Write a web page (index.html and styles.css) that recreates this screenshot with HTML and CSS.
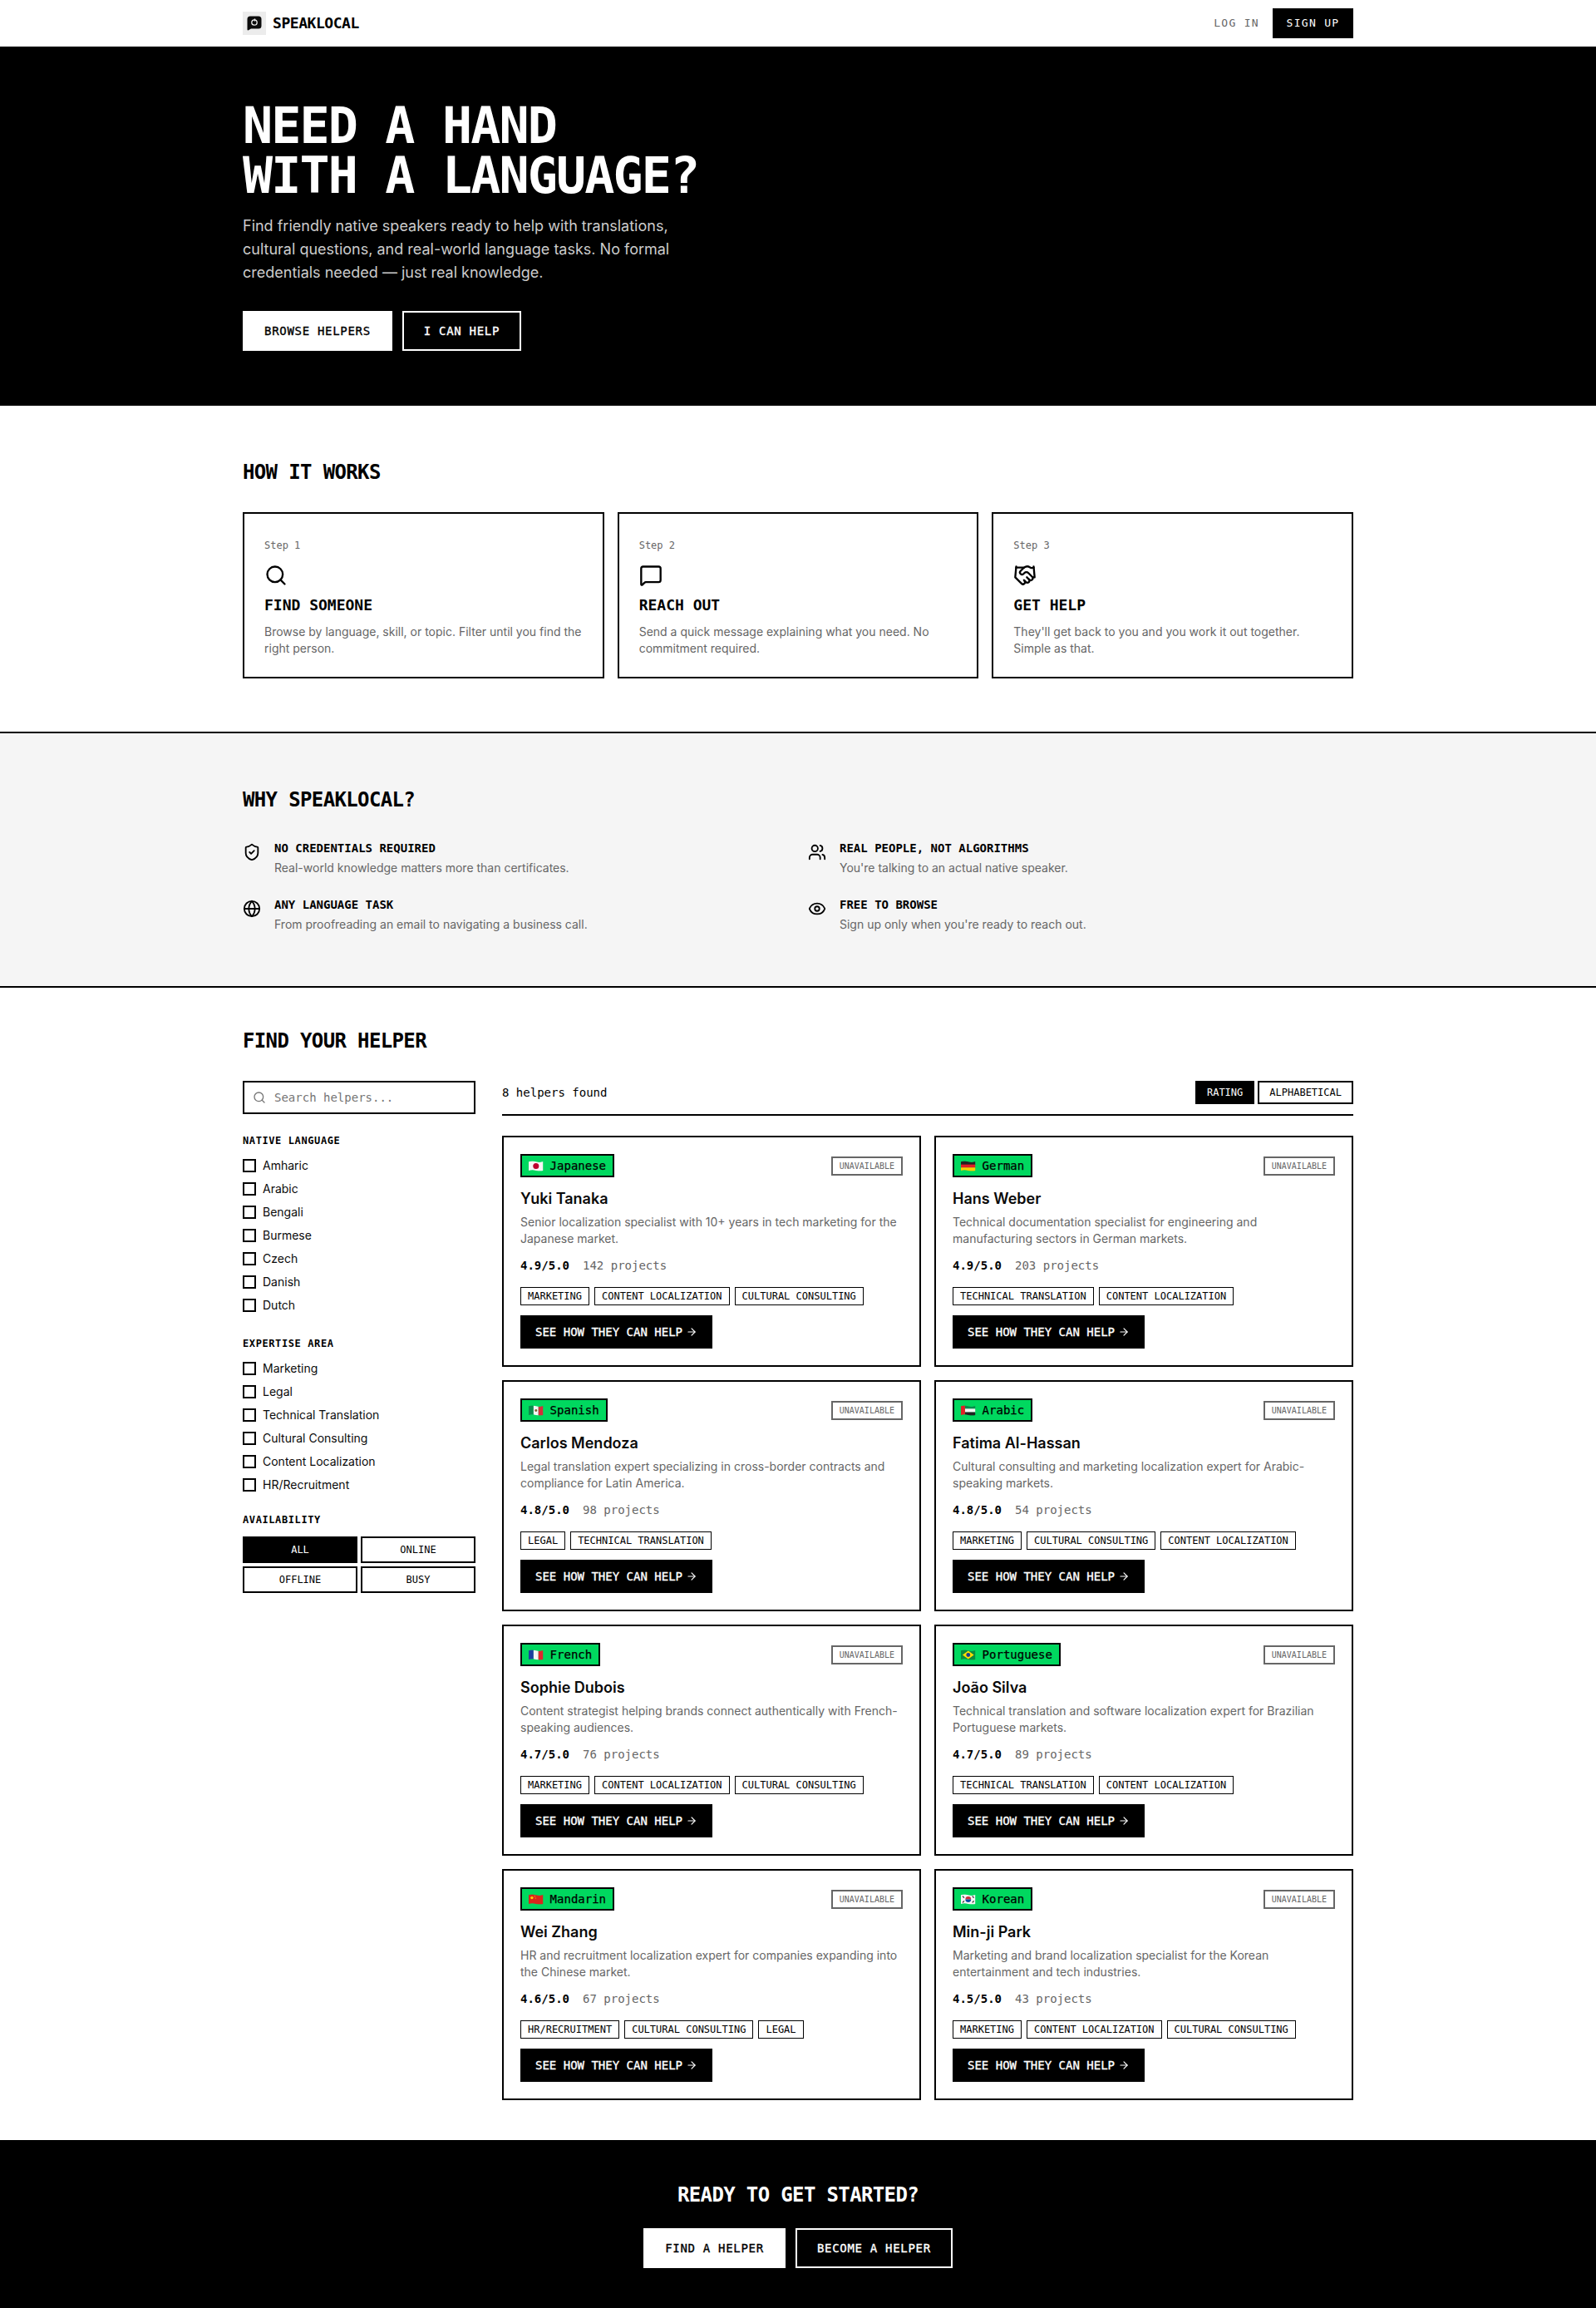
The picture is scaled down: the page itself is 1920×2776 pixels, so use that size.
FILE: index.html
```html
<!DOCTYPE html>
<html lang="en">
<head>
<meta charset="utf-8">
<title>SpeakLocal</title>
<link rel="stylesheet" href="styles.css">
</head>
<body>
<svg class="defs" aria-hidden="true">
  <defs>
    <clipPath id="wave"><path d="M0 1.2C3 .2 5 .2 9 1.2S15 2 18 1V12C15 13 13 13 9 12S3 11.2 0 12.2Z"/></clipPath>
    <symbol id="i-search" viewBox="0 0 24 24"><path d="m21 21-4.34-4.34"/><circle cx="11" cy="11" r="8"/></symbol>
    <symbol id="i-arrow" viewBox="0 0 24 24"><path d="M5 12h14"/><path d="m12 5 7 7-7 7"/></symbol>
  </defs>
</svg>

<header class="nav">
  <div class="wrap nav-row">
    <a class="brand">
      <span class="logo">
        <svg viewBox="0 0 18 18" width="18" height="18"><path class="logo-bubble" d="M4 .5h10A3.5 3.5 0 0 1 17.500 4v8a3.500 3.500 0 0 1-3.500 3.500H5L1.500 17.500A1 1 0 0 1 .5 16.500V4A3.500 3.500 0 0 1 4 .5Z"/><circle class="logo-ring" cx="9" cy="8" r="3.200"/><path class="logo-ring" d="M9.500 3.500v3"/></svg>
      </span>
      <span class="brand-name">SPEAKLOCAL</span>
    </a>
    <div class="nav-actions">
      <a class="login">LOG IN</a>
      <a class="signup">SIGN UP</a>
    </div>
  </div>
</header>

<section class="hero">
  <div class="wrap">
    <h1>NEED A HAND<br>WITH A LANGUAGE?</h1>
    <p class="hero-copy">Find friendly native speakers ready to help with translations, cultural questions, and real-world language tasks. No formal credentials needed — just real knowledge.</p>
    <div class="btn-row">
      <a class="btn btn-light">BROWSE HELPERS</a>
      <a class="btn btn-ghost">I CAN HELP</a>
    </div>
  </div>
</section>

<section class="how">
  <div class="wrap">
    <h2>HOW IT WORKS</h2>
    <div class="steps">
      <article class="step">
        <div class="step-num">Step 1</div>
        <svg class="ico step-ico" viewBox="0 0 24 24"><path d="m21 21-4.340-4.340"/><circle cx="11" cy="11" r="8"/></svg>
        <h3>FIND SOMEONE</h3>
        <p>Browse by language, skill, or topic. Filter until you find the right person.</p>
      </article>
      <article class="step">
        <div class="step-num">Step 2</div>
        <svg class="ico step-ico" viewBox="0 0 24 24"><path d="M22 17a2 2 0 0 1-2 2H6.828a2 2 0 0 0-1.414.586l-2.202 2.202A.71.71 0 0 1 2 21.286V5a2 2 0 0 1 2-2h16a2 2 0 0 1 2 2z"/></svg>
        <h3>REACH OUT</h3>
        <p>Send a quick message explaining what you need. No commitment required.</p>
      </article>
      <article class="step">
        <div class="step-num">Step 3</div>
        <svg class="ico step-ico" viewBox="0 0 24 24"><path d="m11 17 2 2a1 1 0 1 0 3-3"/><path d="m14 14 2.500 2.500a1 1 0 1 0 3-3l-3.880-3.880a3 3 0 0 0-4.240 0l-.88.88a1 1 0 1 1-3-3l2.810-2.810a5.790 5.790 0 0 1 7.060-.87l.47.28a2 2 0 0 0 1.420.25L21 4"/><path d="m21 3 1 11h-2"/><path d="M3 3 2 14l6.500 6.500a1 1 0 1 0 3-3"/><path d="M3 4h8"/></svg>
        <h3>GET HELP</h3>
        <p>They'll get back to you and you work it out together. Simple as that.</p>
      </article>
    </div>
  </div>
</section>

<section class="why">
  <div class="wrap">
    <h2>WHY SPEAKLOCAL?</h2>
    <div class="why-grid">
      <div class="why-item">
        <svg class="ico why-ico" viewBox="0 0 24 24"><path d="M20 13c0 5-3.500 7.500-7.660 8.950a1 1 0 0 1-.67-.01C7.500 20.500 4 18 4 13V6a1 1 0 0 1 1-1c2 0 4.500-1.200 6.240-2.720a1.170 1.170 0 0 1 1.520 0C14.510 3.810 17 5 19 5a1 1 0 0 1 1 1z"/><path d="m9 12 2 2 4-4"/></svg>
        <div><h4>NO CREDENTIALS REQUIRED</h4><p>Real-world knowledge matters more than certificates.</p></div>
      </div>
      <div class="why-item">
        <svg class="ico why-ico" viewBox="0 0 24 24"><path d="M16 21v-2a4 4 0 0 0-4-4H6a4 4 0 0 0-4 4v2"/><circle cx="9" cy="7" r="4"/><path d="M22 21v-2a4 4 0 0 0-3-3.870"/><path d="M16 3.130a4 4 0 0 1 0 7.750"/></svg>
        <div><h4>REAL PEOPLE, NOT ALGORITHMS</h4><p>You're talking to an actual native speaker.</p></div>
      </div>
      <div class="why-item">
        <svg class="ico why-ico" viewBox="0 0 24 24"><circle cx="12" cy="12" r="10"/><path d="M12 2a14.500 14.500 0 0 0 0 20 14.500 14.500 0 0 0 0-20"/><path d="M2 12h20"/></svg>
        <div><h4>ANY LANGUAGE TASK</h4><p>From proofreading an email to navigating a business call.</p></div>
      </div>
      <div class="why-item">
        <svg class="ico why-ico" viewBox="0 0 24 24"><path d="M2.062 12.348a1 1 0 0 1 0-.696 10.750 10.750 0 0 1 19.876 0 1 1 0 0 1 0 .696 10.750 10.750 0 0 1-19.876 0"/><circle cx="12" cy="12" r="3"/></svg>
        <div><h4>FREE TO BROWSE</h4><p>Sign up only when you're ready to reach out.</p></div>
      </div>
    </div>
  </div>
</section>

<section class="finder">
  <div class="wrap">
    <h2>FIND YOUR HELPER</h2>
    <div class="finder-body">
      <aside class="sidebar">
        <label class="search">
          <svg class="ico search-ico"><use href="#i-search"/></svg>
          <span class="search-ph">Search helpers...</span>
        </label>
        <div class="filter filter-lang">
          <h5>NATIVE LANGUAGE</h5>
          <ul class="checks">
            <li><span class="box"></span>Amharic</li>
            <li><span class="box"></span>Arabic</li>
            <li><span class="box"></span>Bengali</li>
            <li><span class="box"></span>Burmese</li>
            <li><span class="box"></span>Czech</li>
            <li><span class="box"></span>Danish</li>
            <li><span class="box"></span>Dutch</li>
          </ul>
        </div>
        <div class="filter">
          <h5>EXPERTISE AREA</h5>
          <ul class="checks">
            <li><span class="box"></span>Marketing</li>
            <li><span class="box"></span>Legal</li>
            <li><span class="box"></span>Technical Translation</li>
            <li><span class="box"></span>Cultural Consulting</li>
            <li><span class="box"></span>Content Localization</li>
            <li><span class="box"></span>HR/Recruitment</li>
          </ul>
        </div>
        <div class="filter">
          <h5>AVAILABILITY</h5>
          <div class="avail">
            <a class="on">ALL</a><a>ONLINE</a><a>OFFLINE</a><a>BUSY</a>
          </div>
        </div>
      </aside>

      <div class="results">
        <div class="toolbar">
          <span class="count">8 helpers found</span>
          <div class="sort"><a class="on">RATING</a><a>ALPHABETICAL</a></div>
        </div>
        <div class="cards">

          <article class="card">
            <div class="card-top">
              <span class="chip"><svg class="flag" viewBox="0 0 18 13"><g clip-path="url(#wave)"><rect width="18" height="13" fill="#f5f5f5"/><circle cx="9" cy="6.500" r="3.600" fill="#bc002d"/></g></svg>Japanese</span>
              <span class="status">UNAVAILABLE</span>
            </div>
            <h3 class="name">Yuki Tanaka</h3>
            <p class="bio">Senior localization specialist with 10+ years in tech marketing for the Japanese market.</p>
            <div class="stats"><b>4.9/5.0</b><span>142 projects</span></div>
            <div class="tags"><span>MARKETING</span><span>CONTENT LOCALIZATION</span><span>CULTURAL CONSULTING</span></div>
            <a class="cta">SEE HOW THEY CAN HELP<svg class="ico cta-ico"><use href="#i-arrow"/></svg></a>
          </article>

          <article class="card">
            <div class="card-top">
              <span class="chip"><svg class="flag" viewBox="0 0 18 13"><g clip-path="url(#wave)"><rect width="18" height="5" fill="#222"/><rect y="4.600" width="18" height="4" fill="#dd1f26"/><rect y="8.400" width="18" height="5" fill="#ffce00"/></g></svg>German</span>
              <span class="status">UNAVAILABLE</span>
            </div>
            <h3 class="name">Hans Weber</h3>
            <p class="bio">Technical documentation specialist for engineering and manufacturing sectors in German markets.</p>
            <div class="stats"><b>4.9/5.0</b><span>203 projects</span></div>
            <div class="tags"><span>TECHNICAL TRANSLATION</span><span>CONTENT LOCALIZATION</span></div>
            <a class="cta">SEE HOW THEY CAN HELP<svg class="ico cta-ico"><use href="#i-arrow"/></svg></a>
          </article>

          <article class="card">
            <div class="card-top">
              <span class="chip"><svg class="flag" viewBox="0 0 18 13"><g clip-path="url(#wave)"><rect width="6" height="13" fill="#0b8a4d"/><rect x="6" width="6" height="13" fill="#f5f5f5"/><rect x="12" width="6" height="13" fill="#d32f3a"/><circle cx="9" cy="6.500" r="1.500" fill="#7a5a2c"/></g></svg>Spanish</span>
              <span class="status">UNAVAILABLE</span>
            </div>
            <h3 class="name">Carlos Mendoza</h3>
            <p class="bio">Legal translation expert specializing in cross-border contracts and compliance for Latin America.</p>
            <div class="stats"><b>4.8/5.0</b><span>98 projects</span></div>
            <div class="tags"><span>LEGAL</span><span>TECHNICAL TRANSLATION</span></div>
            <a class="cta">SEE HOW THEY CAN HELP<svg class="ico cta-ico"><use href="#i-arrow"/></svg></a>
          </article>

          <article class="card">
            <div class="card-top">
              <span class="chip"><svg class="flag" viewBox="0 0 18 13"><g clip-path="url(#wave)"><rect x="5" width="13" height="4.500" fill="#0b8a4d"/><rect x="5" y="4.300" width="13" height="4.400" fill="#f5f5f5"/><rect x="5" y="8.600" width="13" height="5" fill="#222"/><rect width="5" height="13" fill="#e01f26"/></g></svg>Arabic</span>
              <span class="status">UNAVAILABLE</span>
            </div>
            <h3 class="name">Fatima Al-Hassan</h3>
            <p class="bio">Cultural consulting and marketing localization expert for Arabic-speaking markets.</p>
            <div class="stats"><b>4.8/5.0</b><span>54 projects</span></div>
            <div class="tags"><span>MARKETING</span><span>CULTURAL CONSULTING</span><span>CONTENT LOCALIZATION</span></div>
            <a class="cta">SEE HOW THEY CAN HELP<svg class="ico cta-ico"><use href="#i-arrow"/></svg></a>
          </article>

          <article class="card">
            <div class="card-top">
              <span class="chip"><svg class="flag" viewBox="0 0 18 13"><g clip-path="url(#wave)"><rect width="6" height="13" fill="#1d3f9e"/><rect x="6" width="6" height="13" fill="#f5f5f5"/><rect x="12" width="6" height="13" fill="#e0262e"/></g></svg>French</span>
              <span class="status">UNAVAILABLE</span>
            </div>
            <h3 class="name">Sophie Dubois</h3>
            <p class="bio">Content strategist helping brands connect authentically with French-speaking audiences.</p>
            <div class="stats"><b>4.7/5.0</b><span>76 projects</span></div>
            <div class="tags"><span>MARKETING</span><span>CONTENT LOCALIZATION</span><span>CULTURAL CONSULTING</span></div>
            <a class="cta">SEE HOW THEY CAN HELP<svg class="ico cta-ico"><use href="#i-arrow"/></svg></a>
          </article>

          <article class="card">
            <div class="card-top">
              <span class="chip"><svg class="flag" viewBox="0 0 18 13"><g clip-path="url(#wave)"><rect width="18" height="13" fill="#0b8a3e"/><path d="M9 1.500 16 6.500 9 11.500 2 6.500Z" fill="#fedf00"/><circle cx="9" cy="6.500" r="2.500" fill="#1c3a8c"/></g></svg>Portuguese</span>
              <span class="status">UNAVAILABLE</span>
            </div>
            <h3 class="name">João Silva</h3>
            <p class="bio">Technical translation and software localization expert for Brazilian Portuguese markets.</p>
            <div class="stats"><b>4.7/5.0</b><span>89 projects</span></div>
            <div class="tags"><span>TECHNICAL TRANSLATION</span><span>CONTENT LOCALIZATION</span></div>
            <a class="cta">SEE HOW THEY CAN HELP<svg class="ico cta-ico"><use href="#i-arrow"/></svg></a>
          </article>

          <article class="card">
            <div class="card-top">
              <span class="chip"><svg class="flag" viewBox="0 0 18 13"><g clip-path="url(#wave)"><rect width="18" height="13" fill="#d8261c"/><circle cx="4" cy="4.500" r="1.700" fill="#ffd400"/><circle cx="7.500" cy="2.700" r=".6" fill="#ffd400"/><circle cx="8.500" cy="5" r=".6" fill="#ffd400"/></g></svg>Mandarin</span>
              <span class="status">UNAVAILABLE</span>
            </div>
            <h3 class="name">Wei Zhang</h3>
            <p class="bio">HR and recruitment localization expert for companies expanding into the Chinese market.</p>
            <div class="stats"><b>4.6/5.0</b><span>67 projects</span></div>
            <div class="tags"><span>HR/RECRUITMENT</span><span>CULTURAL CONSULTING</span><span>LEGAL</span></div>
            <a class="cta">SEE HOW THEY CAN HELP<svg class="ico cta-ico"><use href="#i-arrow"/></svg></a>
          </article>

          <article class="card">
            <div class="card-top">
              <span class="chip"><svg class="flag" viewBox="0 0 18 13"><g clip-path="url(#wave)"><rect width="18" height="13" fill="#f5f5f5"/><path d="M5.500 6.500a3.500 3.500 0 0 1 7 0Z" fill="#cd2e3a"/><path d="M5.500 6.500a3.500 3.500 0 0 0 7 0Z" fill="#0047a0"/><path d="M2 2.500 4 4.500M14 2.500 16 4.500M2 10.500 4 8.500M14 10.500 16 8.500" stroke="#222" stroke-width="1.200"/></g></svg>Korean</span>
              <span class="status">UNAVAILABLE</span>
            </div>
            <h3 class="name">Min-ji Park</h3>
            <p class="bio">Marketing and brand localization specialist for the Korean entertainment and tech industries.</p>
            <div class="stats"><b>4.5/5.0</b><span>43 projects</span></div>
            <div class="tags"><span>MARKETING</span><span>CONTENT LOCALIZATION</span><span>CULTURAL CONSULTING</span></div>
            <a class="cta">SEE HOW THEY CAN HELP<svg class="ico cta-ico"><use href="#i-arrow"/></svg></a>
          </article>

        </div>
      </div>
    </div>
  </div>
</section>

<section class="ready">
  <h2>READY TO GET STARTED?</h2>
  <div class="btn-row btn-row-center">
    <a class="btn btn-light">FIND A HELPER</a>
    <a class="btn btn-ghost">BECOME A HELPER</a>
  </div>
</section>
</body>
</html>
```
FILE: styles.css
```css
* { box-sizing: border-box; }
html, body { margin: 0; padding: 0; }
body { background: #fff; color: #000; font-family: "Inter", "Liberation Sans", sans-serif; font-size: 14px; line-height: 20px; }
h1, h2, h3, h4, h5, p, ul { margin: 0; padding: 0; }
ul { list-style: none; }
.defs { display: block; width: 0; height: 0; }
.wrap { width: 1336px; margin: 0 auto; }
.ico { fill: none; stroke: currentColor; stroke-width: 2; stroke-linecap: round; stroke-linejoin: round; flex: none; }

h1, h2, .step h3, h4, h5, .brand-name, .login, .signup, .btn, .step-num, .search-ph, .avail a, .sort a, .count, .chip, .status, .stats, .tags span, .cta {
  font-family: "DejaVu Sans Mono", "Liberation Mono", monospace;
}

.nav { height: 56px; background: #fff; }
.nav-row { height: 56px; display: flex; align-items: center; justify-content: space-between; }
.brand { display: flex; align-items: center; gap: 8px; }
.logo { width: 28px; height: 28px; background: #ececec; display: flex; align-items: center; justify-content: center; }
.logo-bubble { fill: #0c0c0c; }
.logo-ring { fill: none; stroke: #f0f0f0; stroke-width: 1.300; }
.brand-name { font-size: 18px; line-height: 28px; font-weight: 700; letter-spacing: -0.45px; }
.nav-actions { display: flex; align-items: center; gap: 16px; }
.login { font-size: 13px; line-height: 20px; letter-spacing: 1.3px; color: #666; }
.signup { font-size: 13px; line-height: 20px; letter-spacing: 1.3px; background: #000; color: #fff; padding: 8px 16.600px; }

.hero { background: #000; color: #fff; padding: 64px 0 66px; }
h1 { padding-top: 1px; font-size: 60px; line-height: 60px; font-weight: 700; letter-spacing: -1.850px; }
.hero-copy { width: 540px; margin-top: 17px; font-size: 18px; line-height: 28px; color: #ccc; }
.btn-row { display: flex; gap: 12px; margin-top: 32px; }
.btn-row-center { justify-content: center; margin-top: 24px; }
.btn { display: block; font-size: 14px; line-height: 20px; letter-spacing: 0.7px; padding: 12px 24px; border: 2px solid #fff; -webkit-text-stroke: 0.35px; }
.btn-light { background: #fff; color: #000; }
.btn-ghost { background: #000; color: #fff; }

h2 { font-size: 24px; line-height: 32px; font-weight: 700; letter-spacing: -0.64px; }

.how { padding: 64px 0; }
.steps { display: grid; grid-template-columns: repeat(3, 1fr); gap: 16px; margin-top: 32px; }
.step { height: 200px; border: 2px solid #000; padding: 30px 24px 24px; }
.step-num { font-size: 12px; line-height: 16px; color: #666; }
.step-ico { display: block; width: 28px; height: 28px; margin-top: 14px; }
.step h3 { margin-top: 8px; font-size: 18px; line-height: 28px; font-weight: 700; }
.step p { margin-top: 8px; color: #666; }

.why { background: #f5f5f5; border-top: 2px solid #000; border-bottom: 2px solid #000; padding: 64px 0; }
.why-grid { display: grid; grid-template-columns: 1fr 1fr; gap: 24px; margin-top: 32px; }
.why-item { display: flex; gap: 16px; align-items: flex-start; }
.why-ico { width: 22px; height: 22px; margin-top: 4px; }
.why-item h4 { font-size: 14px; line-height: 20px; font-weight: 700; }
.why-item p { margin-top: 4px; color: #666; }

.finder { padding: 48px 0; }
.finder-body { display: flex; gap: 32px; margin-top: 32px; }
.sidebar { width: 280px; flex: none; }
.search { display: flex; align-items: center; height: 40px; border: 2px solid #000; padding-left: 10px; gap: 10px; }
.search-ico { width: 16px; height: 16px; color: #757575; }
.search-ph { font-size: 14px; line-height: 20px; color: #757575; }
.filter { margin-top: 24px; }
.filter-lang { margin-bottom: 28px; }
.filter-lang + .filter { margin-top: 0; }
h5 { font-size: 12px; line-height: 16px; font-weight: 700; letter-spacing: 0.6px; }
.checks { margin-top: 12px; display: flex; flex-direction: column; gap: 8px; }
.checks li { display: flex; align-items: center; gap: 8px; line-height: 20px; color: #0a0a0a; }
.box { width: 16px; height: 16px; border: 2px solid #000; flex: none; }
.avail { margin-top: 12px; display: grid; grid-template-columns: 1fr 1fr; gap: 4px; }
.avail a { display: block; font-size: 12px; line-height: 16px; text-align: center; border: 2px solid #000; padding: 6px 0; }
.avail a.on, .sort a.on { background: #000; color: #fff; }

.results { flex: 1; min-width: 0; }
.toolbar { display: flex; align-items: flex-start; justify-content: space-between; height: 42px; border-bottom: 2px solid #000; }
.count { font-size: 14px; line-height: 28px; }
.sort { display: flex; gap: 4px; }
.sort a { display: block; font-size: 12px; line-height: 16px; border: 2px solid #000; padding: 4px 12px; }
.cards { display: grid; grid-template-columns: 1fr 1fr; gap: 16px; margin-top: 24px; }
.card { border: 2px solid #000; padding: 20px; }
.card-top { display: flex; align-items: center; justify-content: space-between; }
.chip { display: flex; align-items: center; gap: 8px; background: #00d85f; border: 2px solid #000; padding: 2px 8px; font-size: 14px; line-height: 20px; -webkit-text-stroke: 0.25px #000; }
.flag { width: 17.600px; height: 13px; flex: none; }
.status { font-size: 10px; line-height: 15px; color: #666; border: 2px solid #666; padding: 2px 8px; }
.name { margin-top: 12px; font-size: 18px; line-height: 28px; font-weight: 600; color: #0a0a0a; }
.bio { margin-top: 4px; color: #666; height: 40px; }
.stats { margin-top: 12px; display: flex; gap: 16px; font-size: 14px; line-height: 20px; color: #666; }
.stats b { color: #000; font-weight: 700; }
.tags { margin-top: 16px; display: flex; gap: 6px; }
.tags span { display: block; font-size: 12px; line-height: 16px; border: 1px solid #000; padding: 2px 8px; }
.cta { display: inline-flex; align-items: center; gap: 4px; vertical-align: top; margin-top: 12px; background: #000; color: #fff; border: 2px solid #000; padding: 8px 16px; font-size: 14px; line-height: 20px; -webkit-text-stroke: 0.35px; }
.cta-ico { width: 14px; height: 14px; }

.ready { background: #000; color: #fff; text-align: center; padding: 50px 0 48px; }
```
